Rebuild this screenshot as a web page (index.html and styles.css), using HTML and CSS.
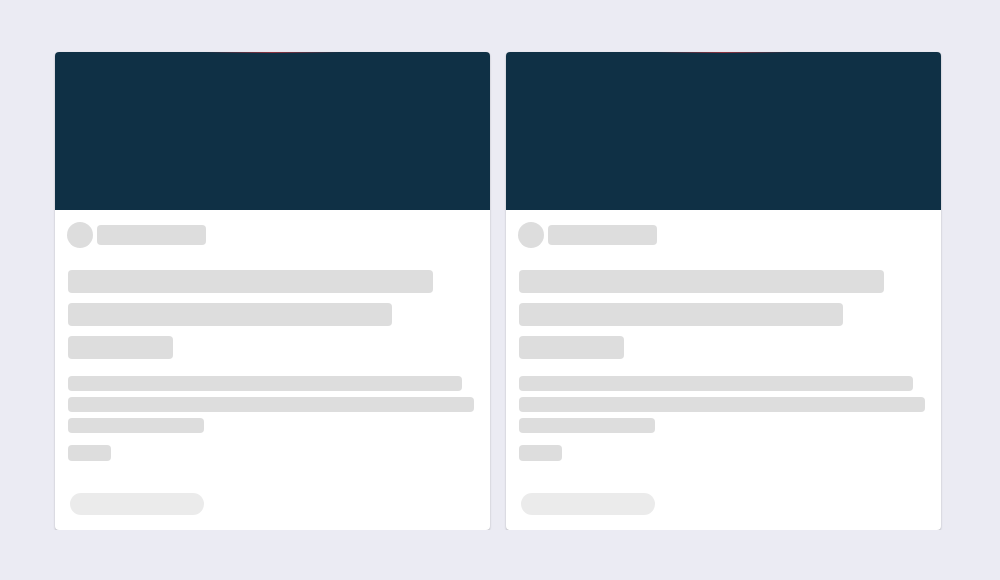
FILE: index.html
```html
<!DOCTYPE html>
<html lang="en">
<head>
    <meta charset="UTF-8">
    <meta name="viewport" content="width=device-width, initial-scale=1.0">
    <title>Loading cards</title>
    <link rel="stylesheet" href="styles.css">
</head>
<body>
    <div class="card-list">
        <div class="card">
            <div class="card-cover"></div>
            <div class="card-body">
                <div class="author">
                    <span class="avatar"></span>
                    <span class="sk author-name"></span>
                </div>
                <div class="title-lines">
                    <span class="sk title w1"></span>
                    <span class="sk title w2"></span>
                    <span class="sk title w3"></span>
                </div>
                <div class="text-lines">
                    <span class="sk line w4"></span>
                    <span class="sk line w5"></span>
                    <span class="sk line w6"></span>
                </div>
                <span class="sk tag"></span>
                <span class="sk action"></span>
            </div>
        </div>
        <div class="card">
            <div class="card-cover"></div>
            <div class="card-body">
                <div class="author">
                    <span class="avatar"></span>
                    <span class="sk author-name"></span>
                </div>
                <div class="title-lines">
                    <span class="sk title w1"></span>
                    <span class="sk title w2"></span>
                    <span class="sk title w3"></span>
                </div>
                <div class="text-lines">
                    <span class="sk line w4"></span>
                    <span class="sk line w5"></span>
                    <span class="sk line w6"></span>
                </div>
                <span class="sk tag"></span>
                <span class="sk action"></span>
            </div>
        </div>
    </div>
</body>
</html>
```

FILE: styles.css
```css
html, body {
    margin: 0;
    background-color: #ebebf3;
    font-family: "Liberation Sans", Arial, sans-serif;
}
.card-list {
    display: grid;
    grid-template-columns: 435px 435px;
    gap: 16px;
    padding: 52px 0 0 55px;
}
.card {
    background-color: #fff;
    border-radius: 4px;
    overflow: hidden;
    box-shadow: 0 1px 2px rgba(0, 0, 0, 0.25);
    height: 478px;
    display: flex;
    flex-direction: column;
}
.card-cover {
    position: relative;
    height: 158px;
    background-color: #0f3045;
}
.card-cover::before {
    content: "";
    position: absolute;
    top: 0;
    left: 150px;
    width: 135px;
    height: 1px;
    background: linear-gradient(to right, rgba(170, 50, 60, 0), rgba(170, 50, 60, 0.8), rgba(170, 50, 60, 0));
}
.card-body {
    display: flex;
    flex-direction: column;
    align-items: flex-start;
    padding: 12px 16px 0 13px;
}
.sk {
    display: block;
    background-color: #dddddd;
    border-radius: 4px;
}
.author {
    display: flex;
    align-items: center;
    gap: 4px;
    margin-left: -1px;
}
.avatar {
    width: 26px;
    height: 26px;
    border-radius: 50%;
    background-color: #dddddd;
}
.author-name {
    width: 109px;
    height: 20px;
}
.title-lines {
    display: flex;
    flex-direction: column;
    gap: 10px;
    margin-top: 22px;
    width: 100%;
}
.title {
    height: 23px;
}
.text-lines {
    display: flex;
    flex-direction: column;
    gap: 6px;
    margin-top: 17px;
    width: 100%;
}
.line {
    height: 15px;
}
.w1 { width: 365px; }
.w2 { width: 324px; }
.w3 { width: 105px; }
.w4 { width: 394px; }
.w5 { width: 406px; }
.w6 { width: 136px; }
.tag {
    width: 43px;
    height: 16px;
    margin-top: 12px;
}
.action {
    width: 134px;
    height: 22px;
    margin: 32px 0 0 2px;
    border-radius: 11px;
    background-color: #ebebeb;
}
```
